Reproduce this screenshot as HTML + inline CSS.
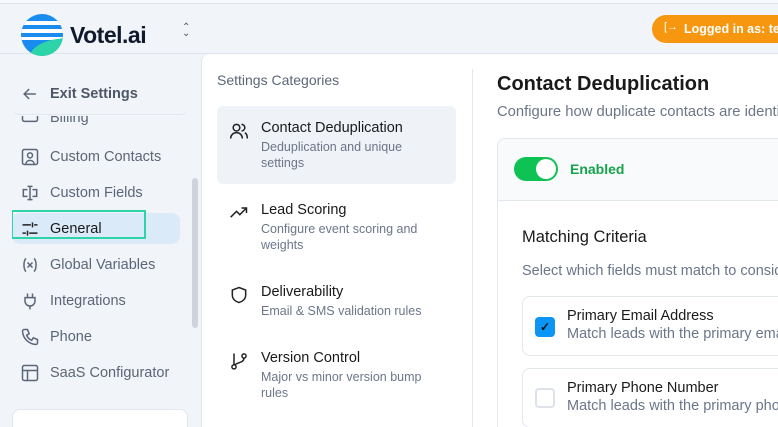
<!DOCTYPE html>
<html style="width:778px;height:427px;overflow:hidden"><head><style>
*{box-sizing:border-box;margin:0;padding:0}
body{width:778px;height:427px;overflow:hidden;background:#f1f4f9;font-family:"Liberation Sans",sans-serif;position:relative}
.a{position:absolute}
.nav{position:absolute;left:20px;font-size:14.5px;color:#5b6678;display:flex;align-items:center}
.nav svg{width:20px;height:20px;margin-right:10px;stroke:#5b6678;fill:none;stroke-width:1.8}
.cat{position:absolute;left:217px;width:239px;padding:14px 0 0 44px}
.cat b{display:block;font-weight:normal;font-size:14.5px;color:#1a1a1a}
.cat span{display:block;font-size:12.5px;color:#6b7689;line-height:16px;margin-top:3px}
.cat svg{position:absolute;left:12px;top:15px;width:20px;height:20px;stroke:#222;fill:none;stroke-width:1.8}
</style></head><body>
<div class="a" style="left:0;top:0;width:778px;height:4px;border-bottom:1px solid #dfe4ec;background:#f7f9fc"></div>
<div class="a" style="left:0;top:53px;width:778px;border-top:1px solid #dfe4ec"></div>
<svg class="a" style="left:20px;top:12px" width="44" height="46" viewBox="0 0 44 46">
<defs><clipPath id="c"><circle cx="22" cy="23" r="21"/></clipPath></defs>
<g clip-path="url(#c)"><rect width="44" height="46" fill="#1a8cf0"/>
<rect y="9" width="44" height="4" fill="#fff"/><rect y="17" width="44" height="4" fill="#fff"/><rect y="25" width="44" height="3" fill="#fff"/>
<path d="M8 46 C14 30 30 28 44 26 L44 46Z" fill="#2dd4a8"/></g></svg>
<div class="a" style="left:70px;top:22px;font-size:23px;font-weight:bold;color:#0f1a2c;letter-spacing:-0.5px">Votel.ai</div>
<div class="a" style="left:182px;top:25px;font-size:10px;color:#555;line-height:6px">⌃<br>⌄</div>
<div class="a" style="left:12px;top:76px;width:176px;height:39px;border-bottom:1px solid #e2e6ed;border-radius:0 0 8px 8px"></div>
<div class="nav" style="top:84px;font-weight:bold;color:#4d5768"><svg viewBox="0 0 24 24"><path d="M19 12H5M11 6l-6 6 6 6"/></svg>Exit Settings</div>
<div class="a" style="left:12px;top:116px;width:176px;height:290px;overflow:hidden">
<div class="nav" style="left:8px;top:-8px"><svg viewBox="0 0 24 24"><rect x="3" y="4" width="18" height="12" rx="2"/></svg>Billing</div>
<div class="nav" style="left:8px;top:31px"><svg viewBox="0 0 24 24"><rect x="3" y="3" width="18" height="18" rx="2"/><circle cx="12" cy="10" r="3"/><path d="M7 21c0-3 2-5 5-5s5 2 5 5"/></svg>Custom Contacts</div>
<div class="nav" style="left:8px;top:67px"><svg viewBox="0 0 24 24"><path d="M12 4v16M9 4h6M9 20h6M9 8H4v8h5M15 8h5v8h-5"/></svg>Custom Fields</div>
<div class="a" style="left:0;top:97px;width:168px;height:31px;background:#dbeaf8;border-radius:8px"></div>
<div class="a" style="left:-1px;top:94px;width:135px;height:29px;border:2px solid #2dd4a8"></div>
<div class="nav" style="left:8px;top:103px;color:#1a1a1a"><svg viewBox="0 0 24 24" style="stroke:#222"><path d="M3 7h10M17 7h4M15 4v6M3 17h4M11 17h10M9 14v6"/></svg>General</div>
<div class="nav" style="left:8px;top:139px"><svg viewBox="0 0 24 24"><path d="M7 4c-3 4-3 12 0 16M17 4c3 4 3 12 0 16M9 9l6 6M15 9l-6 6"/></svg>Global Variables</div>
<div class="nav" style="left:8px;top:175px"><svg viewBox="0 0 24 24"><path d="M9 3v5M15 3v5M6 8h12v4a6 6 0 0 1-12 0zM12 18v4"/></svg>Integrations</div>
<div class="nav" style="left:8px;top:211px"><svg viewBox="0 0 24 24"><path d="M5 3h4l2 5-3 2a11 11 0 0 0 6 6l2-3 5 2v4a2 2 0 0 1-2 2A17 17 0 0 1 3 5a2 2 0 0 1 2-2z"/></svg>Phone</div>
<div class="nav" style="left:8px;top:247px"><svg viewBox="0 0 24 24"><rect x="3" y="3" width="18" height="18" rx="2"/><path d="M3 9h18M9 9v12"/></svg>SaaS Configurator</div>
</div>
<div class="a" style="left:192px;top:178px;width:6px;height:150px;background:#cfd4dc;border-radius:3px"></div>
<div class="a" style="left:12px;top:409px;width:176px;height:18px;background:#fff;border:1px solid #e2e6ed;border-bottom:none;border-radius:8px 8px 0 0"></div>
<div class="a" style="left:201px;top:54px;width:577px;height:373px;background:#fff;border-radius:8px 0 0 0;border-left:1px solid #e2e6ed"></div>
<div class="a" style="left:472px;top:69px;height:358px;border-left:1px solid #e2e6ed"></div>
<div class="a" style="left:217px;top:72px;font-size:14px;color:#5b6678">Settings Categories</div>
<div class="a" style="left:217px;top:106px;width:239px;height:78px;background:#eff3f8;border-radius:6px"></div>
<div class="cat" style="top:106px"><svg viewBox="0 0 24 24"><circle cx="9" cy="8" r="4"/><path d="M2 21c0-4 3-7 7-7s7 3 7 7M15 4a4 4 0 0 1 0 8M19 14c2 1 3 4 3 7"/></svg><b>Contact Deduplication</b><span>Deduplication and unique<br>settings</span></div>
<div class="cat" style="top:188px"><svg viewBox="0 0 24 24"><path d="M2 17l7-7 4 4 8-8M15 6h6v6"/></svg><b>Lead Scoring</b><span>Configure event scoring and<br>weights</span></div>
<div class="cat" style="top:270px"><svg viewBox="0 0 24 24"><path d="M12 3l8 3v6c0 5-4 8-8 9-4-1-8-4-8-9V6z"/></svg><b>Deliverability</b><span>Email &amp; SMS validation rules</span></div>
<div class="cat" style="top:336px"><svg viewBox="0 0 24 24"><circle cx="6" cy="19" r="2.5"/><circle cx="18" cy="6" r="2.5"/><path d="M6 3v13.5M18 8.5c0 6-9 5-11 8.5"/></svg><b>Version Control</b><span>Major vs minor version bump<br>rules</span></div>
<div class="a" style="left:652px;top:15px;width:126px;height:28px;background:#f7960f;border-radius:14px 0 0 14px;color:#fff;font-size:12.5px;font-weight:bold;padding:7px 0 0 32px;white-space:nowrap;overflow:hidden">Logged in as: ter</div>
<div class="a" style="left:664px;top:21px;font-size:11px;color:#fff">[→</div>
<div class="a" style="left:497px;top:73px;font-size:20px;font-weight:bold;color:#1a1a1a">Contact Deduplication</div>
<div class="a" style="left:497px;top:104px;width:281px;overflow:hidden;font-size:14.8px;color:#6b7689;white-space:nowrap">Configure how duplicate contacts are identified</div>
<div class="a" style="left:497px;top:138px;width:281px;height:289px;border:1px solid #e2e6ed;border-right:none;border-bottom:none;border-radius:8px 0 0 0;overflow:hidden">
<div style="height:62px;background:#f8fafc;border-bottom:1px solid #e2e6ed;position:relative">
<div class="a" style="left:16px;top:18px;width:44px;height:24px;background:#0ec254;border-radius:12px"></div>
<div class="a" style="left:38px;top:20px;width:20px;height:20px;background:#fff;border-radius:50%"></div>
<div class="a" style="left:72px;top:22px;font-size:14px;font-weight:bold;color:#16a34a">Enabled</div>
</div>
<div class="a" style="left:24px;top:89px;font-size:16.5px;color:#1a1a1a">Matching Criteria</div>
<div class="a" style="left:24px;top:124px;font-size:14.5px;color:#6b7689;white-space:nowrap">Select which fields must match to consider</div>
<div class="a" style="left:24px;top:157px;width:300px;height:60px;border:1px solid #e2e6ed;border-radius:8px">
<div class="a" style="left:12px;top:20px;width:20px;height:20px;background:#0b96f5;border-radius:4px;color:#111;font-size:12px;text-align:center;line-height:20px;font-weight:bold">✓</div>
<div class="a" style="left:44px;top:11px;font-size:14.5px;color:#1a1a1a;white-space:nowrap">Primary Email Address</div>
<div class="a" style="left:44px;top:29px;font-size:14.5px;color:#6b7689;white-space:nowrap">Match leads with the primary email</div></div>
<div class="a" style="left:24px;top:229px;width:300px;height:60px;border:1px solid #e2e6ed;border-radius:8px">
<div class="a" style="left:12px;top:19px;width:20px;height:20px;border:2px solid #dde2ea;border-radius:4px"></div>
<div class="a" style="left:44px;top:11px;font-size:14.5px;color:#1a1a1a;white-space:nowrap">Primary Phone Number</div>
<div class="a" style="left:44px;top:29px;font-size:14.5px;color:#6b7689;white-space:nowrap">Match leads with the primary phone</div></div>
</div>
</body></html>
